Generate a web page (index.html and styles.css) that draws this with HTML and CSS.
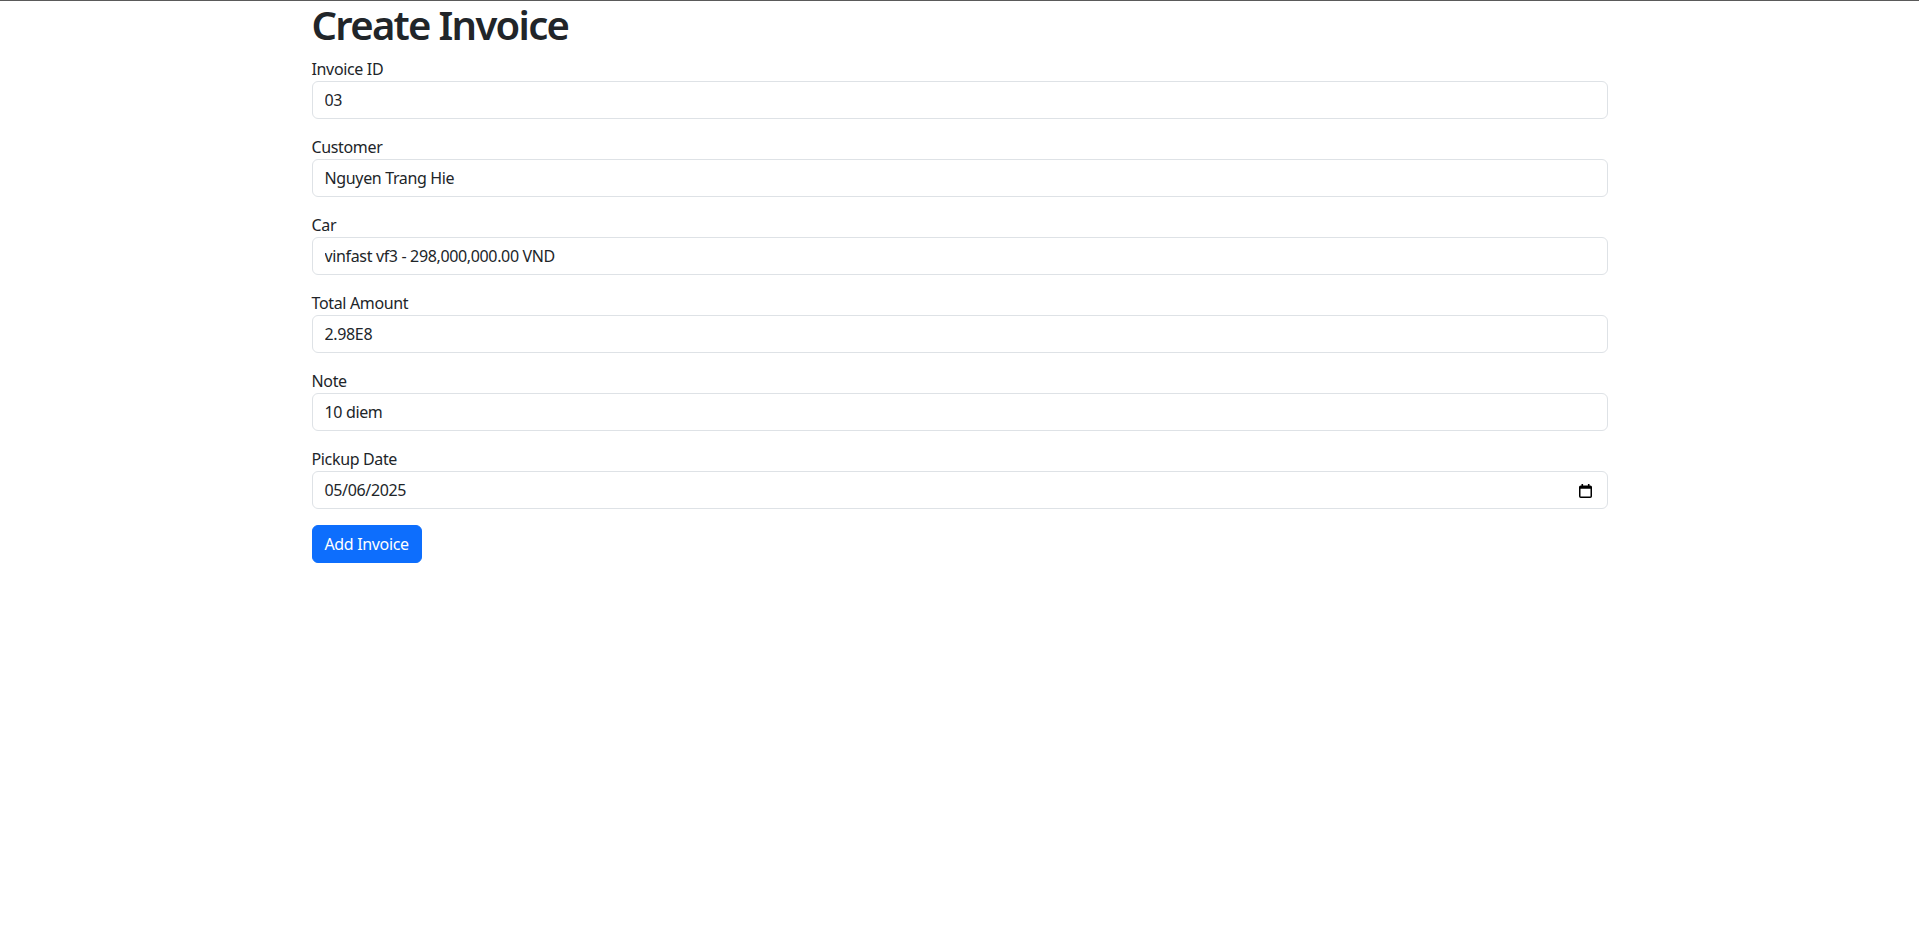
FILE: index.html
```html
<!DOCTYPE html>
<html lang="en">
<head>
<meta charset="utf-8">
<title>Create Invoice</title>
<link rel="stylesheet" href="styles.css">
</head>
<body>
<div class="container">
  <h1 class="title">Create Invoice</h1>
  <form class="invoice-form">
    <div class="field">
      <label for="id">Invoice ID</label>
      <input id="id" class="control" type="text" value="03">
    </div>
    <div class="field">
      <label for="customer">Customer</label>
      <input id="customer" class="control" type="text" value="Nguyen Trang Hie">
    </div>
    <div class="field">
      <label for="car">Car</label>
      <input id="car" class="control" type="text" value="vinfast vf3 - 298,000,000.00 VND">
    </div>
    <div class="field">
      <label for="total">Total Amount</label>
      <input id="total" class="control" type="text" value="2.98E8">
    </div>
    <div class="field">
      <label for="note">Note</label>
      <input id="note" class="control" type="text" value="10 diem">
    </div>
    <div class="field">
      <label for="date">Pickup Date</label>
      <div class="control date-control">
        <span id="date" class="date-value">05/06/2025</span>
        <svg class="cal-icon" width="13" height="14" viewBox="0 0 13 14" aria-hidden="true">
          <rect x="2.5" y="0" width="1.6" height="3" fill="#000"/>
          <rect x="8.9" y="0" width="1.6" height="3" fill="#000"/>
          <rect x="0.75" y="2.25" width="11.5" height="11" rx="1" fill="none" stroke="#000" stroke-width="1.5"/>
          <rect x="0.75" y="2.25" width="11.5" height="2.5" fill="#000"/>
        </svg>
      </div>
    </div>
    <button type="button" class="btn-primary">Add Invoice</button>
  </form>
</div>
</body>
</html>
```

FILE: styles.css
```css
* {
  box-sizing: border-box;
}

html, body {
  margin: 0;
  padding: 0;
}

body {
  border-top: 1px solid #5a5a5a;
  background: #fff;
  color: #212529;
  font-family: "Noto Sans", "Open Sans", "Liberation Sans", sans-serif;
  font-size: 16px;
  line-height: 24px;
  letter-spacing: -0.35px;
}

.container {
  width: 100%;
  max-width: 1320px;
  margin: 0 auto;
  padding: 0 12px;
}

.title {
  margin: 0 0 8px;
  font-size: 40px;
  line-height: 48px;
  font-weight: 600;
  letter-spacing: -1.7px;
  color: #212529;
}

.invoice-form {
  display: flex;
  flex-direction: column;
}

.field {
  display: flex;
  flex-direction: column;
  margin-bottom: 16px;
}

.field label {
  font-size: 16px;
  line-height: 24px;
}

.control {
  display: block;
  width: 100%;
  height: 38px;
  padding: 6px 12px;
  font-family: inherit;
  font-size: 16px;
  line-height: 24px;
  letter-spacing: inherit;
  color: #212529;
  background: #fff;
  border: 1px solid #dee2e6;
  border-radius: 6px;
  outline: none;
}

.date-control {
  display: flex;
  align-items: center;
  justify-content: space-between;
  padding-right: 15px;
}

.cal-icon {
  display: block;
  margin-top: 1px;
}

.btn-primary {
  align-self: flex-start;
  height: 38px;
  padding: 6px 12px;
  font-family: inherit;
  font-size: 16px;
  line-height: 24px;
  letter-spacing: inherit;
  color: #fff;
  background: #0d6efd;
  border: 1px solid #0d6efd;
  border-radius: 6px;
  cursor: pointer;
}
```
